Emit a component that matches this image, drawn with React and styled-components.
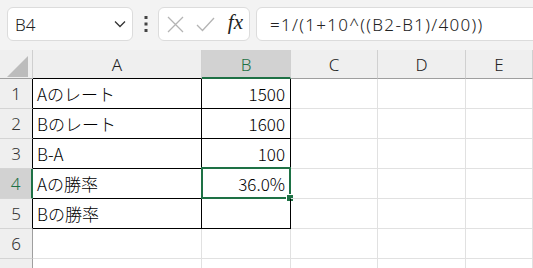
import React from "react";
import styled, { createGlobalStyle } from "styled-components";

const GREEN = "#1e7145";
const GRID = "#e1e1e1";
const FONT = `"Noto Sans CJK JP", "Noto Sans", sans-serif`;

const GlobalStyle = createGlobalStyle`
  html, body {
    margin: 0;
    background: #fff;
    overflow: hidden;
  }
  body {
    font-family: ${FONT};
    color: #000;
  }
`;

const Page = styled.div`
  width: 533px;
  height: 268px;
  overflow: hidden;
  background: #fff;
`;

const Toolbar = styled.div`
  display: flex;
  align-items: center;
  height: 50px;
  box-sizing: border-box;
  padding: 7px 0 9px 7px;
  background: #f3f3f3;
`;

const Panel = styled.div`
  display: flex;
  align-items: center;
  height: 34px;
  box-sizing: border-box;
  background: #fff;
  border: 1px solid #dcdcdc;
  border-radius: 6px;
`;

const NameBox = styled(Panel)`
  width: 126px;
  padding: 0 6px 0 7px;
  justify-content: space-between;
  font-family: "Noto Sans", sans-serif;
  font-size: 17px;
  font-weight: 300;
  color: #222;
`;

const Dots = styled.div`
  width: 25px;
  display: flex;
  justify-content: center;
`;

const FuncBox = styled(Panel)`
  width: 92px;
  padding: 0 6px 0 8px;
  justify-content: space-between;
`;

const Fx = styled.span`
  font-family: "Liberation Serif", "DejaVu Serif", serif;
  font-style: italic;
  font-size: 21px;
  color: #222;
  margin-top: -3px;
`;

const Formula = styled(Panel)`
  flex: 1;
  margin-left: 6px;
  margin-right: -10px;
  padding-left: 13px;
  font-family: "Noto Sans", sans-serif;
  font-size: 17px;
  font-weight: 300;
  letter-spacing: 1.3px;
  color: #222;
`;

const Sheet = styled.div`
  display: grid;
  grid-template-columns: 33px 169px 89px 87px 88px 1fr;
  grid-template-rows: 29px repeat(7, 30px);
  font-size: 17px;
  font-weight: 300;
`;

const Corner = styled.div`
  background: #efefef;
  border-right: 1px solid #cfcfcf;
  border-bottom: 1px solid #9f9f9f;
  position: relative;
  svg {
    position: absolute;
    left: 7px;
    top: 6px;
  }
`;

const ColHead = styled.div`
  display: flex;
  align-items: center;
  justify-content: center;
  background: ${(p) => (p.$active ? "#d2d2d2" : "#efefef")};
  color: ${(p) => (p.$active ? GREEN : "#222")};
  border-right: 1px solid #d0d0d0;
  border-bottom: ${(p) =>
    p.$active ? `2px solid ${GREEN}` : `1px solid ${p.$edge || "#9f9f9f"}`};
  font-family: "Noto Sans", sans-serif;
  padding-top: 1px;
`;

const RowHead = styled.div`
  display: flex;
  align-items: center;
  justify-content: center;
  background: ${(p) => (p.$active ? "#d2d2d2" : "#efefef")};
  color: ${(p) => (p.$active ? GREEN : "#333")};
  border-bottom: 1px solid #d4d4d4;
  border-right: ${(p) =>
    p.$active ? `2px solid ${GREEN}` : `1px solid ${p.$edge || "#9f9f9f"}`};
  font-family: "Noto Sans", sans-serif;
`;

const Cell = styled.div`
  display: flex;
  align-items: center;
  justify-content: ${(p) => (p.$num ? "flex-end" : "flex-start")};
  padding: 0 5px 0 4px;
  box-sizing: border-box;
  border-right: 1px solid ${(p) => (p.$boxed ? "#000" : GRID)};
  border-bottom: 1px solid ${(p) => (p.$boxed ? "#000" : GRID)};
  position: relative;
  white-space: nowrap;
`;

const Selection = styled.div`
  position: absolute;
  left: -1px;
  top: -2px;
  right: -1px;
  bottom: -1px;
  border: 2px solid ${GREEN};
  pointer-events: none;
  &::after {
    content: "";
    position: absolute;
    right: -5px;
    bottom: -5px;
    width: 6px;
    height: 6px;
    background: ${GREEN};
    border: 1px solid #fff;
  }
`;

const columns = ["A", "B", "C", "D", "E"];

const rows = [
  ["Aのレート", "1500"],
  ["Bのレート", "1600"],
  ["B-A", "100"],
  ["Aの勝率", "36.0%"],
  ["Bの勝率", ""],
  ["", ""],
  ["", ""],
];

const Chevron = () => (
  <svg width="12" height="8" viewBox="0 0 12 8">
    <path d="M1 1.5 L6 6.5 L11 1.5" fill="none" stroke="#333" strokeWidth="1.3" />
  </svg>
);

const VDots = () => (
  <svg width="4" height="16" viewBox="0 0 4 16">
    <rect x="0.5" y="0" width="3" height="3" fill="#444" />
    <rect x="0.5" y="6.5" width="3" height="3" fill="#444" />
    <rect x="0.5" y="13" width="3" height="3" fill="#444" />
  </svg>
);

const Cross = () => (
  <svg width="17" height="17" viewBox="0 0 17 17">
    <path d="M1 1 L16 16 M16 1 L1 16" stroke="#b4b4b4" strokeWidth="1.3" />
  </svg>
);

const Check = () => (
  <svg width="19" height="15" viewBox="0 0 19 15">
    <path d="M1 8 L6.5 13.5 L18 1" fill="none" stroke="#b4b4b4" strokeWidth="1.3" />
  </svg>
);

export default function App() {
  return (
    <Page>
      <GlobalStyle />
      <Toolbar>
        <NameBox>
          <span>B4</span>
          <Chevron />
        </NameBox>
        <Dots>
          <VDots />
        </Dots>
        <FuncBox>
          <Cross />
          <Check />
          <Fx>fx</Fx>
        </FuncBox>
        <Formula>=1/(1+10^((B2-B1)/400))</Formula>
      </Toolbar>
      <Sheet>
        <Corner>
          <svg width="21" height="21" viewBox="0 0 21 21">
            <path d="M21 0 L21 21 L0 21 Z" fill="#bcbcbc" />
          </svg>
        </Corner>
        {columns.map((c, i) => (
          <ColHead key={c} $active={c === "B"} $edge={i === 0 ? "#000" : undefined}>
            {c}
          </ColHead>
        ))}
        {rows.map((r, ri) => {
          const inTable = ri < 5;
          return (
            <React.Fragment key={ri}>
              <RowHead $active={ri === 3} $edge={inTable ? "#000" : undefined}>
                {ri < 6 ? ri + 1 : ""}
              </RowHead>
              <Cell $boxed={inTable}>{r[0]}</Cell>
              <Cell $boxed={inTable} $num>
                {r[1]}
                {ri === 3 && <Selection />}
              </Cell>
              <Cell />
              <Cell />
              <Cell />
            </React.Fragment>
          );
        })}
      </Sheet>
    </Page>
  );
}
